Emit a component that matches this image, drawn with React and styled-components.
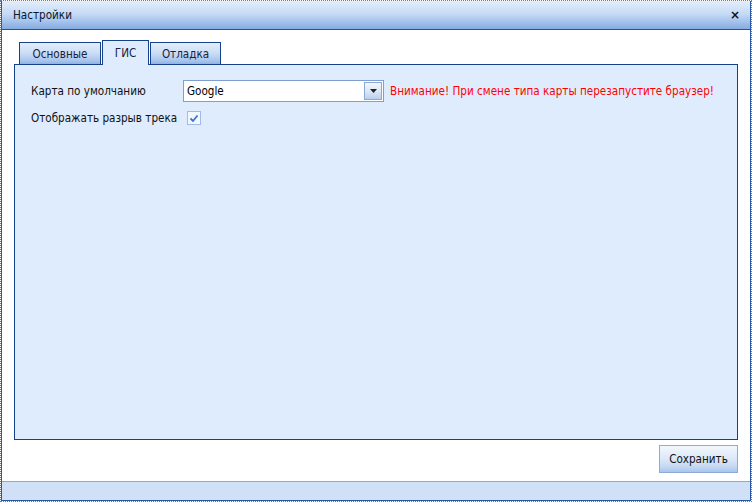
import React from "react";
import styled, { createGlobalStyle } from "styled-components";

const FONT = `"DejaVu Sans Condensed", "DejaVu Sans", sans-serif`;
const SIZE = "11.6px";

const Global = createGlobalStyle`
  html, body { margin: 0; padding: 0; background: #fff; }
  body { font-family: ${FONT}; }
`;

const Window = styled.div`
  width: 752px;
  height: 502px;
  box-sizing: border-box;
  border: 1px dotted #5a7bb5;
  display: flex;
  flex-direction: column;
  background: #fff;
`;

const Inner = styled.div`
  flex: 1;
  display: flex;
  flex-direction: column;
  border-left: 1px solid #2a56a6;
  border-right: 1px solid #2a56a6;
  border-bottom: 1px solid #2a56a6;
`;

const TitleBar = styled.div`
  height: 28px;
  display: flex;
  align-items: center;
  justify-content: space-between;
  padding: 0 10px 0 11px;
  background: linear-gradient(to bottom, #e3eefb 0%, #c6dbf6 45%, #9dbde9 80%, #86ace2 100%);
  border-bottom: 1px solid #2452a0;
  font-family: ${FONT};
  font-size: ${SIZE};
  color: #0a1630;
`;

const Close = styled.span`
  font-family: "DejaVu Sans", sans-serif;
  font-weight: bold;
  font-size: 12px;
  color: #111;
`;

const Body = styled.div`
  flex: 1;
  display: flex;
  flex-direction: column;
  padding: 11px 12px 0 12px;
`;

const TabStrip = styled.div`
  display: flex;
  align-items: flex-end;
  gap: 1px;
  padding-left: 5px;
  height: 24px;
  position: relative;
  z-index: 1;
  margin-bottom: -1px;
`;

const Tab = styled.div`
  box-sizing: border-box;
  width: ${(p) => p.$w}px;
  height: ${(p) => (p.$active ? "25px" : "23px")};
  display: flex;
  align-items: center;
  justify-content: center;
  border: 1px solid #15428b;
  border-bottom: ${(p) => (p.$active ? "none" : "1px solid #15428b")};
  background: ${(p) =>
    p.$active
      ? "#deecfd"
      : "linear-gradient(to bottom, #e4eefb 0%, #cadcf5 50%, #a7c4ec 85%, #8fb2e3 100%)"};
  font-family: ${FONT};
  font-size: ${SIZE};
  color: #15233f;
  padding-top: ${(p) => (p.$active ? "0" : "1px")};
`;

const Panel = styled.div`
  box-sizing: border-box;
  height: 376px;
  border: 1px solid #15428b;
  background: #deecfd;
  padding: 15px 16px;
  display: flex;
  flex-direction: column;
  gap: 9px;
`;

const Row = styled.div`
  display: flex;
  align-items: center;
  height: ${(p) => p.$h}px;
`;

const Label = styled.div`
  width: 152px;
  flex-shrink: 0;
  font-family: ${FONT};
  font-size: ${SIZE};
  color: #111;
  white-space: nowrap;
`;

const Combo = styled.div`
  box-sizing: border-box;
  width: 201px;
  height: 22px;
  flex-shrink: 0;
  border: 1px solid #7e9fd0;
  background: #fff;
  display: flex;
  align-items: center;
`;

const ComboText = styled.div`
  flex: 1;
  padding-left: 3px;
  font-family: ${FONT};
  font-size: ${SIZE};
  color: #000;
`;

const Trigger = styled.div`
  box-sizing: border-box;
  width: 18px;
  height: 18px;
  margin-right: 1px;
  border: 1px solid #8aa8d6;
  background: linear-gradient(to bottom, #f4f8fd 0%, #d9e6f7 55%, #b9cfee 100%);
  display: flex;
  align-items: center;
  justify-content: center;
`;

const Warning = styled.div`
  margin-left: 6px;
  font-family: ${FONT};
  font-size: ${SIZE};
  color: #ff0000;
  white-space: nowrap;
`;

const Check = styled.div`
  box-sizing: border-box;
  width: 14px;
  height: 14px;
  margin-left: 4px;
  border: 1px solid #9fbbe6;
  background: #f3f8ff;
  display: flex;
  align-items: center;
  justify-content: center;
`;

const Footer = styled.div`
  display: flex;
  justify-content: flex-end;
  padding: 5px 0 0 0;
`;

const Button = styled.div`
  box-sizing: border-box;
  width: 79px;
  height: 28px;
  border: 1px solid #8eaad6;
  background: linear-gradient(to bottom, #f2f7fd 0%, #dce8f8 50%, #c4d8f3 80%, #a9c5ec 100%);
  display: flex;
  align-items: center;
  justify-content: center;
  font-family: ${FONT};
  font-size: ${SIZE};
  color: #111;
`;

const Spacer = styled.div`
  flex: 1;
`;

const StatusBar = styled.div`
  height: 18px;
  border-top: 1px solid #8aa9da;
  background: #cfe0f7;
`;

export default function App() {
  return (
    <>
      <Global />
      <Window>
        <Inner>
          <TitleBar>
            <span>Настройки</span>
            <Close>×</Close>
          </TitleBar>
          <Body>
            <TabStrip>
              <Tab $w={82}>Основные</Tab>
              <Tab $active $w={47}>ГИС</Tab>
              <Tab $w={71}>Отладка</Tab>
            </TabStrip>
            <Panel>
              <Row $h={22}>
                <Label>Карта по умолчанию</Label>
                <Combo>
                  <ComboText>Google</ComboText>
                  <Trigger>
                    <svg width="7" height="4" viewBox="0 0 7 4">
                      <path d="M0 0h7L3.5 4z" fill="#222" />
                    </svg>
                  </Trigger>
                </Combo>
                <Warning>Внимание! При смене типа карты перезапустите браузер!</Warning>
              </Row>
              <Row $h={14}>
                <Label>Отображать разрыв трека</Label>
                <Check>
                  <svg width="10" height="9" viewBox="0 0 10 9">
                    <path d="M1.5 4.5 L4 7 L8.5 1.5" stroke="#3b74d6" strokeWidth="1.8" fill="none" />
                  </svg>
                </Check>
              </Row>
            </Panel>
            <Footer>
              <Button>Сохранить</Button>
            </Footer>
            <Spacer />
          </Body>
          <StatusBar />
        </Inner>
      </Window>
    </>
  );
}
